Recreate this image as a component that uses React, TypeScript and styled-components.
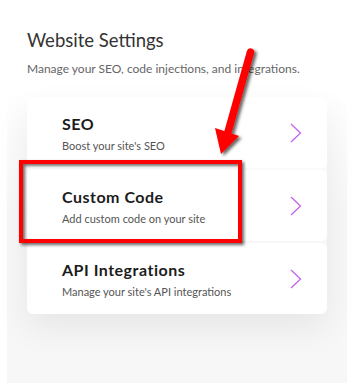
import { ReactElement } from 'react';
import styled, { createGlobalStyle } from 'styled-components';

const GlobalStyle = createGlobalStyle`
  html, body {
    margin: 0;
    padding: 0;
    background: #fff;
  }
  body {
    font-family: Lato, 'Open Sans', sans-serif;
  }
`;

const Page = styled.div`
  position: relative;
  width: 361px;
  height: 383px;
  overflow: hidden;
  background: #fff;
`;

const Panel = styled.div`
  margin-left: 7px;
  width: 340px;
  height: 383px;
  box-sizing: border-box;
  padding: 29px 20px 0;
  background: linear-gradient(to bottom, #fff 0px, #fff 90px, #f7f7f7 220px, #f7f7f7 100%);
`;

const Title = styled.h1`
  margin: 0;
  font-size: 18.5px;
  line-height: 22px;
  font-weight: 400;
  color: #333333;
`;

const Subtitle = styled.p`
  margin: 11px 0 0;
  font-size: 12px;
  line-height: 14.4px;
  color: #666666;
`;

const CardList = styled.div`
  margin-top: 21px;
  width: 300px;
  display: flex;
  flex-direction: column;
  gap: 2px;
  border-radius: 6px;
  box-shadow: 0 14px 34px rgba(0, 0, 0, 0.07);
`;

const Card = styled.div`
  display: flex;
  align-items: center;
  justify-content: space-between;
  height: 71px;
  box-sizing: border-box;
  padding: 0 25px 0 35px;
  background: #fff;
  border-radius: 6px;
`;

const Column = styled.div`
  display: flex;
  flex-direction: column;
  align-items: flex-start;
`;

const CardTitle = styled.div`
  font-size: 16px;
  line-height: 19px;
  font-weight: 700;
  letter-spacing: 0.5px;
  color: #1c1c1c;
`;

const CardText = styled.div`
  margin-top: 6px;
  font-size: 11px;
  line-height: 13.2px;
  color: #555555;
`;

const Highlight = styled.div`
  position: absolute;
  left: 19px;
  top: 160px;
  width: 223px;
  height: 83px;
  box-sizing: border-box;
  border: 4px solid #ff0000;
  box-shadow: 2px 2px 3px rgba(0, 0, 0, 0.6), inset 2px 2px 3px rgba(0, 0, 0, 0.55);
`;

const ArrowLayer = styled.svg`
  position: absolute;
  left: 0;
  top: 0;
`;

const Chevron = () => (
  <svg width="12" height="20" viewBox="0 0 12 20">
    <polyline points="1,1 10.5,10 1,19" fill="none" stroke="#c25ceb" strokeWidth="1.2" />
  </svg>
);

const items = [
  { title: 'SEO', text: "Boost your site's SEO" },
  { title: 'Custom Code', text: 'Add custom code on your site' },
  { title: 'API Integrations', text: "Manage your site's API integrations" },
];

const App = (): ReactElement => {
  return (
    <Page>
      <GlobalStyle />
      <Panel>
        <Title>Website Settings</Title>
        <Subtitle>Manage your SEO, code injections, and integrations.</Subtitle>
        <CardList>
          {items.map((item) => (
            <Card key={item.title}>
              <Column>
                <CardTitle>{item.title}</CardTitle>
                <CardText>{item.text}</CardText>
              </Column>
              <Chevron />
            </Card>
          ))}
        </CardList>
      </Panel>
      <Highlight />
      <ArrowLayer width="361" height="383" viewBox="0 0 361 383">
        <defs>
          <filter id="arrowShadow" x="-50%" y="-20%" width="200%" height="140%">
            <feDropShadow dx="2.5" dy="2" stdDeviation="1.5" floodColor="#000" floodOpacity="0.6" />
          </filter>
        </defs>
        <g filter="url(#arrowShadow)">
          <line x1="250.5" y1="52" x2="228" y2="132" stroke="#ff0000" strokeWidth="7.5" strokeLinecap="round" />
          <polygon points="215,128 239,136 221,154" fill="#ff0000" />
        </g>
      </ArrowLayer>
    </Page>
  );
};

export default App;
